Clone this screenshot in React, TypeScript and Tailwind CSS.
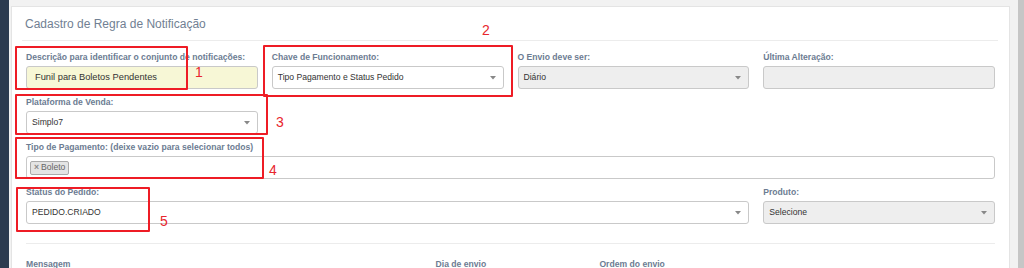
const font = { fontFamily: '"Liberation Sans", Arial, sans-serif' };

function Caret() {
  return (
    <svg className="absolute right-[7px] top-1/2 -mt-[2px]" width="6" height="4" viewBox="0 0 6 4">
      <path d="M0 0h6L3 3.5z" fill="#888" />
    </svg>
  );
}

function Label({ children }: { children: React.ReactNode }) {
  return <div className="h-[12px] mb-[3px] text-[8.6px] leading-[12px] font-bold text-[#6c7c92] whitespace-nowrap">{children}</div>;
}

function Field({
  label,
  value,
  select,
  disabled,
  yellow,
  big,
}: {
  label: string;
  value?: string;
  select?: boolean;
  disabled?: boolean;
  yellow?: boolean;
  big?: boolean;
}) {
  const bg = yellow ? "bg-[#f7f7d6]" : disabled ? "bg-[#eeeeee]" : "bg-white";
  return (
    <div className="mb-[7px]">
      <Label>{label}</Label>
      <div className={`relative h-[23px] border border-[#c9c9c9] rounded-[3px] ${bg} flex items-center ${big ? "px-[8px]" : "px-[5px]"}`}>
        <span className={`${big ? "text-[9.3px]" : "text-[8.6px]"} text-[#333]`}>{value}</span>
        {select && <Caret />}
      </div>
    </div>
  );
}

function RedBox({ cls }: { cls: string }) {
  return <div className={`absolute border-2 border-[#ee1c25] rounded-[1px] ${cls}`} />;
}

function Num({ n, cls }: { n: string; cls: string }) {
  return <div className={`absolute text-[14px] leading-[14px] text-[#e8262d] ${cls}`}>{n}</div>;
}

export default function App() {
  return (
    <div className="relative w-[1024px] h-[268px] overflow-hidden flex bg-[#f2f2f2]" style={font}>
      <div className="w-[9px] bg-[#2c3b4f]" />
      <div className="flex-1 pl-[2px] pr-[8px] pt-[6px]">
        <div className="bg-white border border-[#e4e4e4] h-[300px] px-[10px]">
          <div className="px-[3px] pt-[8px] pb-[7px] text-[12px] leading-[18px] text-[#717f93]">
            Cadastro de Regra de Notificação
          </div>
          <div className="h-px bg-[#ececec] mr-[1px]" />
          <div className="px-[4px] pt-[10px]">
            <div className="grid grid-cols-4 gap-x-[14px]">
              <Field label="Descrição para identificar o conjunto de notificações:" value="Funil para Boletos Pendentes" yellow big />
              <Field label="Chave de Funcionamento:" value="Tipo Pagamento e Status Pedido" select />
              <Field label="O Envio deve ser:" value="Diário" select disabled />
              <Field label="Última Alteração:" disabled />
              <Field label="Plataforma de Venda:" value="Simplo7" select />
              <div className="col-span-3" />
              <div className="col-span-4 mb-[7px]">
                <Label>Tipo de Pagamento: (deixe vazio para selecionar todos)</Label>
                <div className="h-[23px] border border-[#c9c9c9] rounded-[3px] bg-white flex items-center px-[3px]">
                  <span className="h-[14px] flex items-center px-[3px] gap-[2px] bg-[#e4e4e4] border border-[#aaaaaa] rounded-[2px] text-[8.6px] text-[#666]">
                    <span className="text-[8.6px] font-bold text-[#888]">×</span>Boleto
                  </span>
                </div>
              </div>
              <div className="col-span-3">
                <Field label="Status do Pedido:" value="PEDIDO.CRIADO" select />
              </div>
              <Field label="Produto:" value="Selecione" select disabled />
            </div>
            <div className="h-px bg-[#ececec] mt-[12px]" />
            <div className="grid grid-cols-12 gap-x-[14px] pt-[14px] text-[8.6px] leading-[12px] font-bold text-[#6c7c92]">
              <div className="col-span-5">Mensagem</div>
              <div className="col-span-2">Dia de envio</div>
              <div className="col-span-2">Ordem do envio</div>
            </div>
          </div>
        </div>
      </div>
      <div className="w-[6px] bg-[#c6c6c6]" />

      <RedBox cls="left-[15px] top-[46px] w-[173px] h-[44px]" />
      <RedBox cls="left-[263px] top-[45px] w-[250px] h-[52px]" />
      <RedBox cls="left-[15px] top-[94px] w-[253px] h-[41px]" />
      <RedBox cls="left-[15px] top-[137px] w-[249px] h-[42px]" />
      <RedBox cls="left-[16px] top-[187px] w-[134px] h-[45px]" />
      <Num n="1" cls="left-[195px] top-[65px]" />
      <Num n="2" cls="left-[482px] top-[23px]" />
      <Num n="3" cls="left-[276px] top-[115px]" />
      <Num n="4" cls="left-[269px] top-[163px]" />
      <Num n="5" cls="left-[160px] top-[214px]" />
    </div>
  );
}
